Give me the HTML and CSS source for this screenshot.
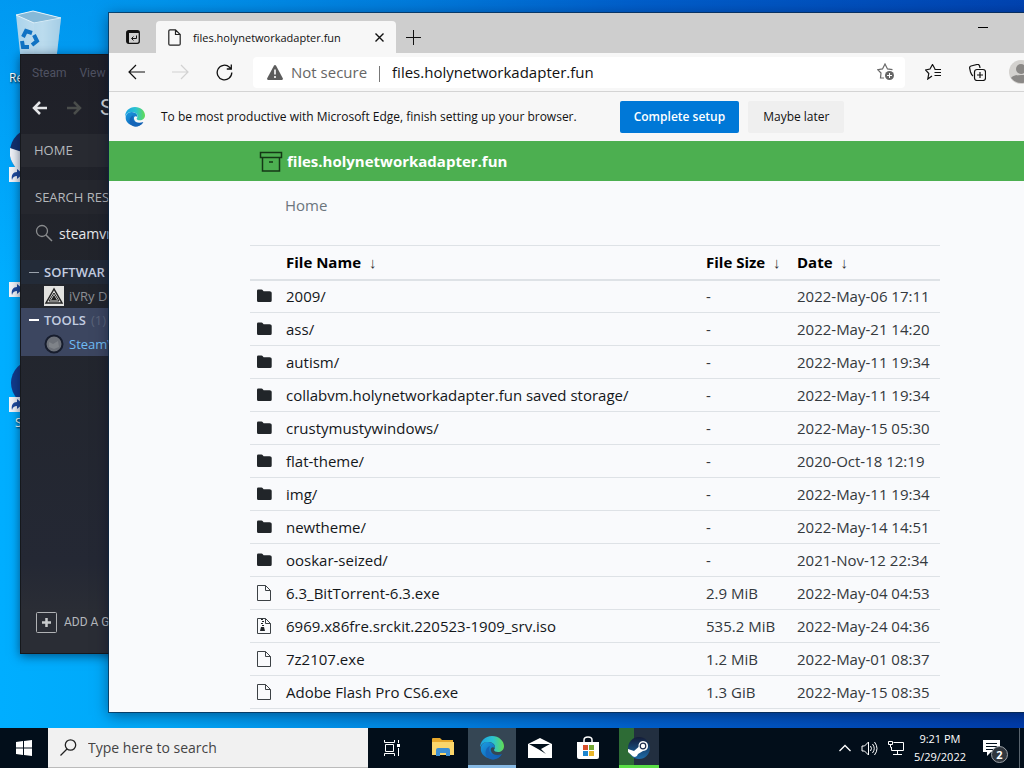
FILE: index.html
```html
<!DOCTYPE html>
<html lang="en">
<head>
<meta charset="utf-8">
<title>Desktop</title>
<link rel="stylesheet" href="styles.css">
</head>
<body>
<svg class="defs" width="0" height="0" aria-hidden="true">
  <defs>
    <linearGradient id="edge-blue" x1="0" y1="0" x2="1" y2="1"><stop offset="0" stop-color="#1b9de2"/><stop offset="1" stop-color="#0c4fa8"/></linearGradient>
    <linearGradient id="edge-green" x1="0" y1="0" x2="1" y2="0"><stop offset="0" stop-color="#1ba3e4"/><stop offset=".55" stop-color="#2cc3cf"/><stop offset="1" stop-color="#62dc52"/></linearGradient>
    <linearGradient id="steam-blue" x1="0" y1="0" x2="0" y2="1"><stop offset="0" stop-color="#141c38"/><stop offset="1" stop-color="#1c6ba8"/></linearGradient>
    <linearGradient id="bin" x1="0" y1="0" x2="1" y2="0"><stop offset="0" stop-color="#a9d3ec"/><stop offset=".6" stop-color="#c6e0ef"/><stop offset="1" stop-color="#8fbddb"/></linearGradient>
  </defs>
  <symbol id="edge" viewBox="0 0 24 24">
    <path fill="url(#edge-blue)" d="M1 11C2 6 8 5 12 7c2 1 3 3 3 5-3-2-5 0-4 3 1 4 6 5 11 3-3 5-9 7-14 4C3 20 0 16 1 11z"/>
    <path fill="#1565b8" d="M8 22C4 18 5 12 10 10c-2 4 0 9 5 10 3 1 5 0 7-2-3 5-9 7-14 4z"/>
    <path fill="url(#edge-green)" d="M0 12C0 5 5 0 12 0s12 5 12 10c0 4-3 6-6 6-2 0-4-1-4-2 0-1 1-1 1-3 0-3-3-5-7-5-4 0-7 2-8 6z"/>
  </symbol>
  <symbol id="folder" viewBox="0 0 16 16"><path fill="#212529" d="M1 2.8Q1 1.5 2.3 1.5h3.2q.8 0 1.3.7l.8 1h6Q15.700 3.200 15.700 4.700v7.800q0 1.500-1.500 1.500H2.400Q1 14 1 12.500z"/></symbol>
  <symbol id="file" viewBox="0 0 16 18"><path fill="none" stroke="#3c4145" d="M1.500 1.500h8l5 5v10h-13zM9.500 1.500v5h5"/></symbol>
  <symbol id="zip" viewBox="0 0 16 18"><path fill="none" stroke="#3c4145" d="M1.500 1.500h8l5 5v10h-13zM9.500 1.500v5h5"/><path fill="#212529" d="M5 2h2v1H5zM6 4h2v1H6zM5 6h2v1H5zM6 8h2v1H6zM5 10h3l1 4H4z"/></symbol>
  <symbol id="shortcut" viewBox="0 0 15 15"><path fill="#f4f6fa" d="M0 0h15v15H0z"/><path fill="#1f4a9c" d="M3 13C2 8 4 5 8 5V2l6 5-6 5V9c-3 0-4 1-5 4z"/></symbol>
</svg>

<div class="screen">
  <main class="desktop">
    <div class="shortcut bin">
      <svg width="50" height="60" viewBox="0 0 50 60"><path fill="url(#bin)" d="M2 5 19 1l28 7-5 44H7z"/><path fill="#86b9d8" stroke="#e3f2fa" d="M2 5 19 1l28 7-27 5z"/><path fill="#b4d8ec" opacity=".6" d="M20 13l27-5-5 44H20z"/><g fill="none" stroke="#1173c4" stroke-width="4"><path d="M9 27l3-6 6 2"/><path d="M20 25l3 6-5 4"/><path d="M15 37H9l-1-6"/></g></svg>
      <span>Re</span>
    </div>
    <div class="shortcut first"><svg width="50" height="54" viewBox="0 0 50 54"><circle cx="25" cy="24" r="24" fill="#12306e"/><path fill="#f0f3f8" d="M1 20l24 8v20C12 48 3 38 1 28z"/><use href="#shortcut" x="0" y="39" width="15" height="15"/></svg></div>
    <div class="shortcut second"><svg width="15" height="15"><use href="#shortcut"/></svg></div>
    <div class="shortcut third"><svg width="50" height="54" viewBox="0 0 50 54"><circle cx="25" cy="24" r="23" fill="#123a8c"/><use href="#shortcut" x="0" y="38" width="15" height="15"/></svg><span>S</span></div>

    <section class="steam" aria-label="Steam">
      <nav class="steam-menu"><a href="#">Steam</a><a href="#">View</a></nav>
      <div class="steam-nav">
        <svg width="16" height="16" viewBox="0 0 16 16"><path d="M15 8H2M8 2L2 8l6 6" fill="none" stroke="#e4e6e8" stroke-width="2.500"/></svg>
        <svg width="16" height="16" viewBox="0 0 16 16"><path d="M1 8h13M8 2l6 6-6 6" fill="none" stroke="#4a4d4b" stroke-width="2.500"/></svg>
        <span>S</span>
      </div>
      <div class="steam-home">HOME</div>
      <div class="steam-results">SEARCH RES</div>
      <label class="steam-search">
        <svg width="18" height="18" viewBox="0 0 18 18"><circle cx="7" cy="7" r="5.500" fill="none" stroke="#8a8c8e" stroke-width="1.300"/><path d="M11 11l6 6" stroke="#8a8c8e" stroke-width="1.500"/></svg>
        <input type="text" value="steamvr" aria-label="Search library">
      </label>
      <div class="steam-group"><i></i>SOFTWAR</div>
      <div class="steam-item"><svg width="20" height="20" viewBox="0 0 20 20"><path fill="#e2e2e0" d="M0 0h20v20H0z"/><path fill="none" stroke="#222" stroke-width="1.500" d="M10 3L2 17h16z"/><path fill="none" stroke="#222" d="M10 7l-5 8h10z"/><path fill="#222" d="M10 9l3 5H7z"/></svg>iVRy D</div>
      <div class="steam-picked">
        <div class="steam-group on"><i></i>TOOLS <small>(1)</small></div>
        <div class="steam-item on"><svg width="20" height="20" viewBox="0 0 20 20"><circle cx="10" cy="10" r="8.500" fill="#6c7078" stroke="#171d2d" stroke-width="2"/><path fill="#7f8389" d="M5 8l4 2 5-3 1 6-5 2-5-2z"/></svg>SteamV</div>
      </div>
      <button class="steam-add" type="button"><svg width="21" height="21" viewBox="0 0 21 21"><rect x=".5" y=".5" width="20" height="20" rx="1" fill="none" stroke="#b0b2b5"/><path d="M10.500 6v9M6 10.500h9" stroke="#c8cacc" stroke-width="2.500"/></svg>ADD A G</button>
    </section>

    <section class="browser" aria-label="Microsoft Edge">
      <header class="tabs">
        <button class="tab-menu" type="button" aria-label="Tab actions"><svg width="14" height="14" viewBox="0 0 14 14"><rect x=".7" y=".7" width="12.600" height="12.600" rx="2" fill="none" stroke="#111" stroke-width="1.300"/><path fill="#111" d="M1 1h12v2H1zM1 3h2v10H1z"/><path d="M10.500 5.500v3H6M7.500 6.500l-2 2 2 2" fill="none" stroke="#111"/></svg></button>
        <div class="tab">
          <svg width="13" height="17" viewBox="0 0 13 17"><path d="M.8 2Q.8.8 2 .8h5.500l4.700 4.700V15q0 1.200-1.200 1.200H2Q.8 16.200.8 15zM7.500.8v4.700h4.700" fill="none" stroke="#222" stroke-width="1.200"/></svg>
          <span>files.holynetworkadapter.fun</span>
          <button type="button" aria-label="Close tab"><svg width="9" height="9" viewBox="0 0 9 9"><path d="M.5.5l8 8M8.500.5l-8 8" stroke="#111" stroke-width="1.400"/></svg></button>
        </div>
        <button class="tab-new" type="button" aria-label="New tab"><svg width="15" height="15" viewBox="0 0 15 15"><path d="M7.500 0v15M0 7.500h15" stroke="#111"/></svg></button>
        <div class="controls">
          <button type="button" aria-label="Minimize"><svg width="10" height="10" viewBox="0 0 10 10"><path d="M0 4.500h10" stroke="#000"/></svg></button>
          <button type="button" aria-label="Maximize"><svg width="10" height="10" viewBox="0 0 10 10"><path d="M.5.5h9v9h-9z" fill="none" stroke="#000"/></svg></button>
          <button type="button" aria-label="Close"><svg width="10" height="10" viewBox="0 0 10 10"><path d="M0 0l10 10M10 0L0 10" stroke="#000"/></svg></button>
        </div>
      </header>
      <div class="toolbar">
        <button type="button" aria-label="Back"><svg width="17" height="16" viewBox="0 0 17 16"><path d="M17 8H1M8 1L1 8l7 7" fill="none" stroke="#111" stroke-width="1.200"/></svg></button>
        <button type="button" aria-label="Forward"><svg width="17" height="16" viewBox="0 0 17 16"><path d="M0 8h16M9 1l7 7-7 7" fill="none" stroke="#d2d2d2" stroke-width="1.200"/></svg></button>
        <button type="button" aria-label="Refresh"><svg width="17" height="17" viewBox="0 0 17 17"><path d="M15.800 8.500A7.300 7.300 0 1 1 13.500 3.200L15 5M15.300.5V5h-4.500" fill="none" stroke="#111" stroke-width="1.300"/></svg></button>
        <div class="address">
          <svg width="16" height="15" viewBox="0 0 16 15"><path fill="#5c5c5c" d="M8 0q.7 0 1.100.7l6.700 12.500q.5 1.300-.8 1.800H1q-1.300-.5-.8-1.800L6.900.7Q7.300 0 8 0z"/><path d="M8 4.500v5M8 11v2" stroke="#fff" stroke-width="1.600"/></svg>
          <span class="insecure">Not secure</span>
          <input type="text" value="files.holynetworkadapter.fun" aria-label="Address">
          <button type="button" aria-label="Add to favorites"><svg width="18" height="18" viewBox="0 0 18 18"><path d="M7 15H3.500L4 10 .8 6.700l4.700-.8L8 1l2.500 4.900 5 .8" fill="none" stroke="#6a6a6a" stroke-width="1.200"/><circle cx="12.500" cy="12.500" r="4.500" fill="#666"/><path d="M12.500 10v5M10 12.500h5" stroke="#fff"/></svg></button>
        </div>
        <button type="button" aria-label="Favorites"><svg width="17" height="16" viewBox="0 0 17 16"><path d="M7 12l-4.200 3 1-5.500L.5 6 5 5l2.500-4.500L10 5M9.500 5.500H16M9.500 8.500H16M9.500 11.500H16" fill="none" stroke="#111" stroke-width="1.200"/></svg></button>
        <button type="button" aria-label="Collections"><svg width="17" height="17" viewBox="0 0 17 17"><rect x="5.500" y="5.500" width="11" height="11" rx="2.500" fill="none" stroke="#111" stroke-width="1.200"/><path d="M11 8v6M8 11h6M4 12Q2.500 11 1.500 8L.6 4Q.5 2.500 2 2l6-1.500Q10 0 10.600 2L11 4" fill="none" stroke="#111" stroke-width="1.200"/></svg></button>
        <button type="button" aria-label="Profile"><svg width="24" height="24" viewBox="0 0 24 24"><circle cx="12" cy="12" r="12" fill="#d4d2cf"/><circle cx="12" cy="9" r="5" fill="#8a8886"/><path d="M2 18q2-3 10-3t10 3q-4 5-10 5T2 18z" fill="#8a8886"/></svg></button>
      </div>
      <div class="notice">
        <svg width="20" height="20"><use href="#edge"/></svg>
        <p>To be most productive with Microsoft Edge, finish setting up your browser.</p>
        <button class="primary" type="button">Complete setup</button>
        <button type="button">Maybe later</button>
      </div>
      <div class="page">
        <div class="banner">
          <a class="container brand" href="#"><svg width="24" height="24" viewBox="0 0 24 24"><path d="M20.500 9v13h-17V9M1.500 3.500h21v5h-21zM10 13h4" fill="none" stroke="#143816" stroke-width="1.500"/></svg>files.holynetworkadapter.fun</a>
        </div>
        <div class="container">
          <div class="crumb">Home</div>
          <table>
            <thead><tr><th class="ico"></th><th>File Name <a href="#">↓</a></th><th class="size">File Size <a href="#">↓</a></th><th class="date">Date <a href="#">↓</a></th></tr></thead>
            <tbody>
              <tr><td><svg><use href="#folder"/></svg></td><td><a href="#">2009/</a></td><td>-</td><td>2022-May-06 17:11</td></tr>
              <tr><td><svg><use href="#folder"/></svg></td><td><a href="#">ass/</a></td><td>-</td><td>2022-May-21 14:20</td></tr>
              <tr><td><svg><use href="#folder"/></svg></td><td><a href="#">autism/</a></td><td>-</td><td>2022-May-11 19:34</td></tr>
              <tr><td><svg><use href="#folder"/></svg></td><td><a href="#">collabvm.holynetworkadapter.fun saved storage/</a></td><td>-</td><td>2022-May-11 19:34</td></tr>
              <tr><td><svg><use href="#folder"/></svg></td><td><a href="#">crustymustywindows/</a></td><td>-</td><td>2022-May-15 05:30</td></tr>
              <tr><td><svg><use href="#folder"/></svg></td><td><a href="#">flat-theme/</a></td><td>-</td><td>2020-Oct-18 12:19</td></tr>
              <tr><td><svg><use href="#folder"/></svg></td><td><a href="#">img/</a></td><td>-</td><td>2022-May-11 19:34</td></tr>
              <tr><td><svg><use href="#folder"/></svg></td><td><a href="#">newtheme/</a></td><td>-</td><td>2022-May-14 14:51</td></tr>
              <tr><td><svg><use href="#folder"/></svg></td><td><a href="#">ooskar-seized/</a></td><td>-</td><td>2021-Nov-12 22:34</td></tr>
              <tr><td><svg><use href="#file"/></svg></td><td><a href="#">6.3_BitTorrent-6.3.exe</a></td><td>2.9 MiB</td><td>2022-May-04 04:53</td></tr>
              <tr><td><svg><use href="#zip"/></svg></td><td><a href="#">6969.x86fre.srckit.220523-1909_srv.iso</a></td><td>535.2 MiB</td><td>2022-May-24 04:36</td></tr>
              <tr><td><svg><use href="#file"/></svg></td><td><a href="#">7z2107.exe</a></td><td>1.2 MiB</td><td>2022-May-01 08:37</td></tr>
              <tr><td><svg><use href="#file"/></svg></td><td><a href="#">Adobe Flash Pro CS6.exe</a></td><td>1.3 GiB</td><td>2022-May-15 08:35</td></tr>
            </tbody>
          </table>
        </div>
      </div>
    </section>
  </main>

  <footer class="taskbar">
    <button class="start" type="button" aria-label="Start"><svg width="16" height="16" viewBox="0 0 16 16"><path fill="#fff" d="M0 2l7-1v6.500H0zM8 1l8-1v7.500H8zM0 8.500h7V15l-7-1zM8 8.500h8V16l-8-1z"/></svg></button>
    <label class="search"><svg width="17" height="17" viewBox="0 0 17 17"><circle cx="10.500" cy="6" r="5.200" fill="none" stroke="#222" stroke-width="1.300"/><path d="M7 10l-6.500 6.500" stroke="#222" stroke-width="1.300"/></svg><input type="text" placeholder="Type here to search" aria-label="Search"></label>
    <button class="app view" type="button" aria-label="Task view"><svg width="16" height="16" viewBox="0 0 16 16"><path d="M.5 0v2.500h10V0M.5 16v-2.500h10V16M1.500 4.500h8v7h-8zM14.500 0v3M14.500 8v8" fill="none" stroke="#fff"/><path fill="#fff" d="M13 4h3v3h-3z"/></svg></button>
    <button class="app files" type="button" aria-label="File Explorer"><svg width="22" height="19" viewBox="0 0 22 19"><path fill="#e8a92c" d="M0 1q0-1 1-1h7l2 2h11v4H0z"/><path fill="#fbd66b" d="M0 4h22v13H0z"/><path fill="#3d8fd3" d="M4 18v-6q0-2 2-2h10q2 0 2 2v6h-4v-3H8v3z"/></svg></button>
    <button class="app active" type="button" aria-label="Microsoft Edge"><svg width="24" height="24"><use href="#edge"/></svg></button>
    <button class="app" type="button" aria-label="Mail"><svg width="24" height="20" viewBox="0 0 24 20"><path fill="#fff" d="M0 6l12-6 12 6v14H0z"/><path fill="#02101c" d="M1 6h21l-9 5 5 5-8-5z"/></svg></button>
    <button class="app" type="button" aria-label="Store"><svg width="24" height="24" viewBox="0 0 24 24"><path d="M8 7V4q0-3 4-3t4 3v3" fill="none" stroke="#fff" stroke-width="1.500"/><path fill="#fff" d="M1 6h22v15q0 2-2 2H3q-2 0-2-2z"/><path fill="#d94f2b" d="M7 9h5v5H7z"/><path fill="#74a834" d="M13 9h5v5h-5z"/><path fill="#1d86d0" d="M7 15h5v5H7z"/><path fill="#e8b52a" d="M13 15h5v5h-5z"/></svg></button>
    <button class="app steam-app" type="button" aria-label="Steam"><svg width="22" height="22" viewBox="0 0 22 22"><circle cx="11" cy="11" r="11" fill="url(#steam-blue)"/><path fill="#fff" d="M0 12l6 2 4.500-4q-.5-5.500 4.500-6 5 .5 5 5 0 4.500-5 5l-5 3q-1 4-5 2.500L0 15z"/><circle cx="15" cy="9" r="2.800" fill="#fff" stroke="#1c2c4c" stroke-width="1.200"/></svg></button>
    <div class="tray">
      <svg width="12" height="8" viewBox="0 0 12 8"><path d="M.5 7L6 1.500 11.500 7" fill="none" stroke="#fff" stroke-width="1.300"/></svg>
      <svg width="17" height="15" viewBox="0 0 17 15"><path d="M1 5h2.500l4-4v13l-4-4H1zM9.500 5q2 2.500 0 5M11.500 3q3.500 4.500 0 9M13.500 1q5 6.500 0 13" fill="none" stroke="#fff"/></svg>
      <svg width="16" height="14" viewBox="0 0 16 14"><path d="M5.500 1.500h10v8H3.500V6M9.500 9.500V13M5 13.500h9M.5.500h4v3h-4zM2.500 3.500v3" fill="none" stroke="#fff"/></svg>
      <time class="clock"><span>9:21 PM</span><span>5/29/2022</span></time>
      <button class="alerts" type="button" aria-label="Notifications"><svg width="17" height="16" viewBox="0 0 17 16"><path fill="#fff" d="M0 0h17v12H8l-4 4v-4H0z"/><path d="M3 3.500h11M3 6.500h11M3 9.500h7" stroke="#02101c"/></svg><b>2</b></button>
    </div>
  </footer>
</div>
</body>
</html>
```
FILE: styles.css
```css
* { box-sizing: border-box; }
body { margin: 0; font-family: "Open Sans", "Noto Sans", sans-serif; color: #111; }
button, input { font: inherit; color: inherit; border: 0; background: none; padding: 0; margin: 0; outline: 0; min-width: 0; }
button { display: flex; align-items: center; justify-content: center; white-space: nowrap; }
a { color: inherit; text-decoration: none; }
svg { display: block; flex: none; }
.defs { position: absolute; }

.screen { display: flex; flex-direction: column; height: 100vh; overflow: hidden; }
.desktop {
  position: relative; flex: 1; overflow: hidden;
  background: linear-gradient(to bottom, rgba(0, 90, 200, .25), transparent 40%), linear-gradient(to right, #00aeff 0, #00a8f8 15%, #0086e2 40%, #0060cc 62%, #003caa 100%);
}

/* Desktop shortcuts */
.shortcut { position: absolute; left: 9px; font-size: 12px; line-height: 16px; color: #fff; text-shadow: 1px 1px 2px #000; }
.shortcut span { display: block; }
.bin { left: 9px; top: 10px; }
.bin svg { margin-left: 5px; }
.first { top: 128px; }
.second { top: 282px; }
.third { top: 359px; }
.third span { padding: 2px 6px; }

/* Steam window */
.steam {
  position: absolute; left: 20px; top: 54px; bottom: 74px; right: 30%;
  display: flex; flex-direction: column; overflow: hidden;
  background: linear-gradient(#1f2028, #22252c 40%, #242834 85%, #2a2d35 93%);
  box-shadow: 0 2px 10px rgba(0, 20, 50, .6); color: #b5b8bc; font-size: 13px; border: 1px solid #16181c;
}
.steam-menu { display: flex; gap: 13px; padding: 10px 11px 0; font-size: 12px; line-height: 16px; color: #4f5262; font-family: Roboto, sans-serif; }
.steam-nav { display: flex; align-items: center; gap: 18px; height: 53px; padding-left: 11px; font-size: 22px; color: #d8dadc; font-family: Roboto, sans-serif; }
.steam-home { height: 33px; line-height: 33px; padding-left: 13px; background: #282a31; }
.steam-results { margin-top: 13px; height: 34px; line-height: 34px; padding-left: 14px; background: #25272e; }
.steam-search { display: flex; align-items: center; gap: 6px; height: 38px; padding-left: 14px; font-size: 14px; color: #e6e8ea; }
.steam-group { display: flex; align-items: center; gap: 5px; height: 24px; padding-left: 8px; font-weight: 600; color: #c3cde0; background: #232b38; }
.steam-search + .steam-group { margin-top: 8px; }
.steam-group i { width: 10px; height: 1px; background: #9aa2ac; }
.steam-group small { font-size: 13px; font-weight: 400; color: #5a6379; }
.steam-group.on { background: none; }
.steam-group.on i { height: 2px; background: #fff; }
.steam-item { display: flex; align-items: center; gap: 5px; height: 24px; padding-left: 23px; color: #8c8f94; }
.steam-item.on { color: #6fbdf5; }
.steam-picked { background: #3c4660; }
.steam-add { margin-top: auto; gap: 7px; height: 62px; padding-left: 15px; justify-content: flex-start; font-size: 12px; font-family: Roboto, sans-serif; }

/* Browser window, its right edge past the screen */
.browser {
  position: absolute; left: 109px; right: -74px; top: 13px; bottom: 16px;
  display: flex; flex-direction: column; overflow: hidden; background: #f9fafc;
  box-shadow: 0 0 0 1px rgba(10, 40, 70, .7), 0 3px 14px rgba(0, 10, 40, .5);
}
.tabs { display: flex; height: 40px; background: #cecece; }
.tab-menu { width: 47px; padding-top: 8px; }
.tab { display: flex; align-items: center; width: 240px; margin-top: 8px; padding: 0 12px; background: #f7f7f7; border-radius: 4px 4px 0 0; font-size: 11px; }
.tab span { flex: 1; padding-left: 12px; }
.tab button { width: 10px; height: 20px; }
.tab-new { width: 35px; padding-top: 8px; }
.controls { display: flex; margin-left: auto; }
.controls button { width: 46px; height: 30px; }
.toolbar { display: flex; align-items: center; height: 39px; padding: 0 55px 0 5px; background: #f7f7f7; border-bottom: 1px solid #d4d4d4; }
.toolbar > button { width: 44px; height: 30px; }
.address { flex: 1; display: flex; align-items: center; height: 31px; margin: 0 6px 0 7px; padding: 0 10px 0 14px; background: #fff; border-radius: 4px; font-size: 15px; }
.insecure { padding-left: 8px; color: #666; }
.insecure::after { content: ""; display: inline-block; width: 1px; height: 16px; margin: 0 12px; background: #777; vertical-align: middle; }
.address input { flex: 1; }
.notice { display: flex; align-items: center; height: 49px; padding-left: 16px; background: #f7f7f7; font-size: 12px; }
.notice p { margin: 0 43px 0 16px; white-space: nowrap; }
.notice button { height: 32px; padding: 0 15px; background: #efefef; border-radius: 2px; }
.notice .primary { margin-right: 9px; padding: 0 14px; background: #0078d7; color: #fff; font-weight: 600; }

/* File index page */
.page { flex: 1; padding-right: 17px; background: #f9fafc; font-size: 15px; }
.banner { margin-right: -17px; padding-right: 17px; background: #4caf50; }
.container { max-width: 720px; margin: 0 auto; padding: 0 15px; }
.brand { display: flex; align-items: center; gap: 4px; height: 40px; padding-left: 24px; color: #fff; font-weight: 700; }
.crumb { height: 64px; padding: 12px 35px; line-height: 24px; color: #6c757d; }
table { width: 100%; border-collapse: collapse; table-layout: fixed; border-top: 1px solid #dee2e6; }
th, td { height: 33px; padding: 0 5px; border-bottom: 1px solid #dee2e6; text-align: left; white-space: nowrap; line-height: 24px; }
th { height: 34px; border-bottom-width: 2px; color: #000; font-weight: 700; }
th a { margin-left: 4px; font-weight: 400; color: #333; }
.ico { width: 31px; }
.size { width: 91px; }
.date { width: 148px; }
td { color: #34393d; }
td a { color: #14171a; }
td svg { width: 16px; height: 18px; margin-left: 1px; }

/* Taskbar */
.taskbar { display: flex; height: 40px; background: #020e1a; color: #fff; }
.start { width: 48px; }
.search { display: flex; align-items: center; gap: 11px; width: 320px; padding-left: 12px; background: #f1f1f1; border-bottom: 1px solid #bbb; font-size: 14px; color: #444; }
.search input { flex: 1; }
.search input::placeholder { color: #444; opacity: 1; }
.app { width: 48px; border-bottom: 3px solid transparent; padding-top: 2px; }
.view { width: 52px; padding-right: 5px; }
.files { padding-right: 3px; }
.active { background: #354654; border-color: #86b9e4; }
.steam-app { width: 40px; margin-left: 7px; border-color: #5ade46; background: linear-gradient(to right, #2d6b35 15px, #222f40 15px); }
.tray { display: flex; align-items: center; gap: 10px; margin-left: auto; padding-right: 4px; font-size: 11px; }
.clock { display: flex; flex-direction: column; align-items: center; line-height: 18px; }
.alerts { position: relative; width: 54px; height: 40px; padding-right: 2px; margin-left: -10px; border-right: 1px solid #59646e; }
.alerts b { position: absolute; left: 25px; top: 18px; width: 17px; height: 17px; border: 1px solid #9aa0a6; border-radius: 50%; background: #30363d; font-size: 11px; line-height: 15px; }
```
